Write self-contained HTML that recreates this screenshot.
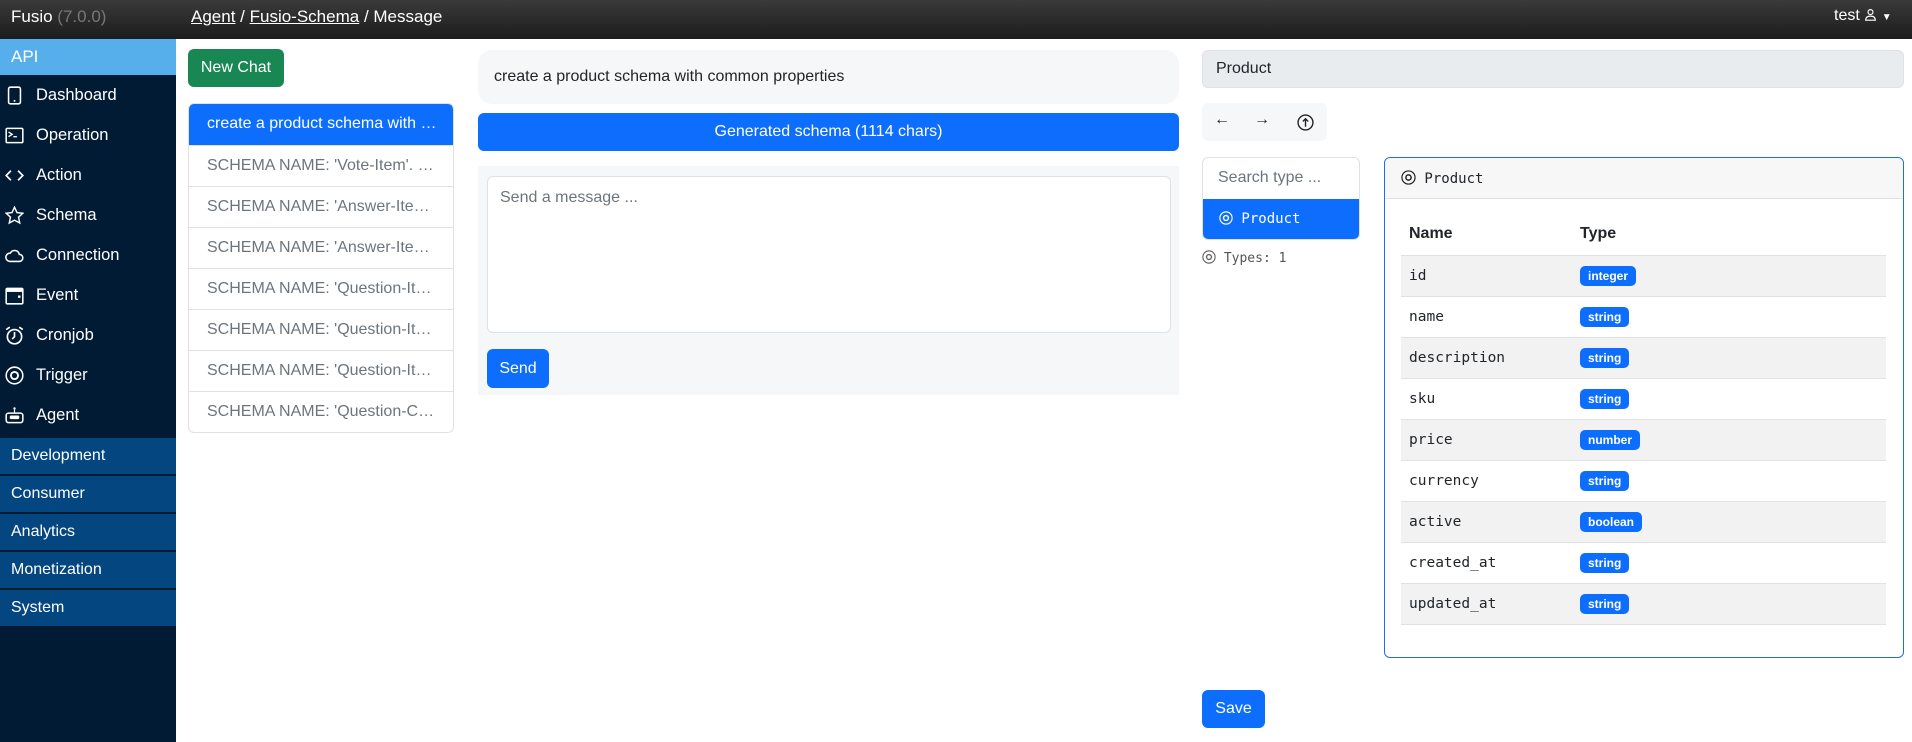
<!DOCTYPE html>
<html><head><meta charset="utf-8"><style>
*{box-sizing:border-box;margin:0;padding:0}
body{width:1912px;height:742px;overflow:hidden;font-family:"Liberation Sans",Arial,sans-serif;background:#fff;position:relative;color:#212529}
.abs{position:absolute}
.top{left:0;top:0;width:1912px;height:39px;background:linear-gradient(#3a3a3a,#1c1c1c);color:#fff;font-size:17px}
.side{left:0;top:39px;width:176px;height:703px;background:#001b33;color:#fff}
.side .it{height:40px;display:flex;align-items:center;font-size:16.5px;padding-left:5px}
.side .it svg{width:19px;height:19px;margin-right:12px;flex:none}
.sec{height:38px;background:#04467f;border-bottom:2px solid #001b33;font-size:16px;padding-left:11px;line-height:36px}
.list{left:188px;top:103px;width:266px;border:1px solid #dee2e6;border-radius:6px;overflow:hidden}
.list div{height:41px;line-height:40px;padding-left:18px;font-size:16px;color:#6c757d;border-top:1px solid #dee2e6;white-space:nowrap}
.list div.a{background:#0d6efd;color:#fff;border-top:none;height:41px}
.btn{color:#fff;border-radius:6px;font-size:16px;text-align:center}
.mono{font-family:"DejaVu Sans Mono","Liberation Mono",monospace}
table{border-collapse:collapse;width:485px}
td,th{text-align:left;height:41px;padding-left:8px;border-bottom:1px solid #dee2e6}
th{font-size:16px;font-weight:bold;border-bottom:1px solid #dee2e6}
td.n{font-family:"DejaVu Sans Mono",monospace;font-size:14.5px;width:171px}
tbody tr:nth-child(odd){background:#f2f2f2}
.b{display:inline-block;background:#0d6efd;color:#fff;font-size:12px;font-weight:bold;padding:3px 8px;border-radius:5px}
</style></head><body>
<div class="abs top">
 <span class="abs" style="left:11px;top:7px">Fusio <span style="color:#777">(7.0.0)</span></span>
 <span class="abs" style="left:191px;top:7px"><u>Agent</u> / <u>Fusio-Schema</u> / Message</span>
 <span class="abs" style="left:1834px;top:7px;font-size:16px">test <svg width="13" height="13" viewBox="0 0 16 16" style="vertical-align:-1px"><circle cx="8" cy="5" r="3" fill="none" stroke="#fff" stroke-width="1.4"/><path d="M2 15c0-4 3-5 6-5s6 1 6 5z" fill="none" stroke="#fff" stroke-width="1.4"/></svg> <span style="font-size:10px">▼</span></span>
</div>
<div class="abs side">
 <div style="height:36px;background:#56aeea;font-size:17px;line-height:36px;padding-left:11px">API</div>
 <div class="it"><svg viewBox="0 0 16 16"><rect x="3" y="1" width="10" height="14" rx="1.5" fill="none" stroke="#fff" stroke-width="1.3"/><circle cx="8" cy="12.5" r=".8" fill="#fff"/></svg>Dashboard</div>
 <div class="it"><svg viewBox="0 0 16 16"><rect x="1" y="2" width="14" height="12" rx="1" fill="none" stroke="#fff" stroke-width="1.3"/><path d="M3 5l3 2-3 2M7 9h3" stroke="#fff" fill="none" stroke-width="1.2"/></svg>Operation</div>
 <div class="it"><svg viewBox="0 0 16 16"><path d="M5 4L1 8l4 4M11 4l4 4-4 4" stroke="#fff" fill="none" stroke-width="1.4"/></svg>Action</div>
 <div class="it"><svg viewBox="0 0 16 16"><path d="M8 1l2.1 4.5 4.9.6-3.6 3.3 1 4.9L8 11.9 3.6 14.3l1-4.9L1 6.1l4.9-.6z" stroke="#fff" fill="none" stroke-width="1.2"/></svg>Schema</div>
 <div class="it"><svg viewBox="0 0 16 16"><path d="M4 13h8a3 3 0 0 0 0-6 4 4 0 0 0-7.5-1A3.5 3.5 0 0 0 4 13z" stroke="#fff" fill="none" stroke-width="1.3"/></svg>Connection</div>
 <div class="it"><svg viewBox="0 0 16 16"><rect x="1" y="2" width="14" height="13" rx="1" fill="none" stroke="#fff" stroke-width="1.3"/><rect x="1" y="2" width="14" height="3" fill="#fff"/><rect x="11" y="8" width="2" height="2" fill="#fff"/></svg>Event</div>
 <div class="it"><svg viewBox="0 0 16 16"><circle cx="8" cy="9" r="6" stroke="#fff" fill="none" stroke-width="1.4"/><path d="M8 5v4l-2 2M1 3l3-2M15 3l-3-2" stroke="#fff" fill="none" stroke-width="1.4"/></svg>Cronjob</div>
 <div class="it"><svg viewBox="0 0 16 16"><circle cx="8" cy="8" r="7" stroke="#fff" fill="none" stroke-width="1.3"/><circle cx="8" cy="8" r="3" stroke="#fff" fill="none" stroke-width="1.6"/></svg>Trigger</div>
 <div class="it"><svg viewBox="0 0 16 16"><rect x="1" y="6" width="14" height="8" rx="2" fill="none" stroke="#fff" stroke-width="1.3"/><path d="M8 2v4" stroke="#fff"/><circle cx="8" cy="2" r="1" fill="#fff"/><rect x="4" y="8" width="8" height="3" rx="1" fill="#fff"/></svg>Agent</div>
 <div style="height:3px"></div>
 <div class="sec">Development</div><div class="sec">Consumer</div><div class="sec">Analytics</div><div class="sec">Monetization</div><div class="sec">System</div>
</div>
<div class="abs btn" style="left:188px;top:49px;width:96px;height:38px;line-height:38px;background:#198754">New Chat</div>
<div class="abs list">
 <div class="a" style="color:#fff">create a product schema with …</div>
 <div>SCHEMA NAME: 'Vote-Item'. …</div>
 <div>SCHEMA NAME: 'Answer-Ite…</div>
 <div>SCHEMA NAME: 'Answer-Ite…</div>
 <div>SCHEMA NAME: 'Question-It…</div>
 <div>SCHEMA NAME: 'Question-It…</div>
 <div>SCHEMA NAME: 'Question-It…</div>
 <div>SCHEMA NAME: 'Question-C…</div>
</div>
<div class="abs" style="left:478px;top:50px;width:701px;height:54px;background:#f6f7f9;border-radius:14px;font-size:16px;padding:18px 16px">create a product schema with common properties</div>
<div class="abs btn" style="left:478px;top:113px;width:701px;height:38px;line-height:38px;background:#0d6efd">Generated schema (1114 chars)</div>
<div class="abs" style="left:478px;top:166px;width:701px;height:229px;background:#f6f7f9"></div>
<div class="abs" style="left:487px;top:176px;width:684px;height:157px;background:#fff;border:1px solid #dee2e6;border-radius:6px;font-size:16px;color:#6c757d;padding:12px 12px">Send a message ...</div>
<div class="abs btn" style="left:487px;top:349px;width:62px;height:39px;line-height:39px;background:#0d6efd">Send</div>
<div class="abs" style="left:1202px;top:50px;width:702px;height:38px;background:#e9ecef;border:1px solid #dee2e6;border-radius:6px;font-size:16px;line-height:36px;padding-left:13px">Product</div>
<div class="abs" style="left:1202px;top:103px;width:125px;height:38px;background:#f6f7f9;border-radius:6px;font-size:16px">
 <span class="abs" style="left:12px;top:8px">←</span><span class="abs" style="left:52px;top:8px">→</span>
 <svg class="abs" style="left:95px;top:11px" width="17" height="17" viewBox="0 0 16 16"><circle cx="8" cy="8" r="7" fill="none" stroke="#222" stroke-width="1.3"/><path d="M8 12V4.5M5.5 7L8 4.5 10.5 7" fill="none" stroke="#222" stroke-width="1.3"/></svg>
</div>
<div class="abs" style="left:1202px;top:157px;width:158px;height:83px;border:1px solid #dee2e6;border-radius:6px;overflow:hidden">
 <div style="height:41px;font-size:16px;color:#6c757d;padding:11px 15px">Search type ...</div>
 <div style="height:42px;background:#0d6efd;color:#fff;font-size:14px;padding:12px 16px" class="mono"><svg width="14" height="14" viewBox="0 0 16 16" style="vertical-align:-2px"><circle cx="8" cy="8" r="7" fill="none" stroke="#fff" stroke-width="1.3"/><circle cx="8" cy="8" r="2.8" fill="none" stroke="#fff" stroke-width="1.6"/></svg> Product</div>
</div>
<div class="abs mono" style="left:1202px;top:250px;font-size:13px;color:#555"><svg width="14" height="14" viewBox="0 0 16 16" style="vertical-align:-2px"><circle cx="8" cy="8" r="7" fill="none" stroke="#666" stroke-width="1.3"/><circle cx="8" cy="8" r="2.8" fill="none" stroke="#666" stroke-width="1.6"/></svg> Types: 1</div>
<div class="abs" style="left:1384px;top:157px;width:520px;height:501px;border:1px solid #1f6fe0;border-radius:6px;overflow:hidden">
 <div class="mono" style="height:41px;background:#f7f7f7;border-bottom:1px solid #dee2e6;font-size:14px;padding:12px 16px"><svg width="15" height="15" viewBox="0 0 16 16" style="vertical-align:-2px"><circle cx="8" cy="8" r="7" fill="none" stroke="#222" stroke-width="1.3"/><circle cx="8" cy="8" r="2.8" fill="none" stroke="#222" stroke-width="1.6"/></svg> Product</div>
 <table style="margin:15px 0 0 16px">
  <thead><tr><th>Name</th><th>Type</th></tr></thead>
  <tbody>
  <tr><td class="n">id</td><td><span class="b">integer</span></td></tr>
  <tr><td class="n">name</td><td><span class="b">string</span></td></tr>
  <tr><td class="n">description</td><td><span class="b">string</span></td></tr>
  <tr><td class="n">sku</td><td><span class="b">string</span></td></tr>
  <tr><td class="n">price</td><td><span class="b">number</span></td></tr>
  <tr><td class="n">currency</td><td><span class="b">string</span></td></tr>
  <tr><td class="n">active</td><td><span class="b">boolean</span></td></tr>
  <tr><td class="n">created_at</td><td><span class="b">string</span></td></tr>
  <tr><td class="n">updated_at</td><td><span class="b">string</span></td></tr>
  </tbody>
 </table>
</div>
<div class="abs btn" style="left:1202px;top:690px;width:63px;height:38px;line-height:38px;background:#0d6efd">Save</div>
</body></html>
